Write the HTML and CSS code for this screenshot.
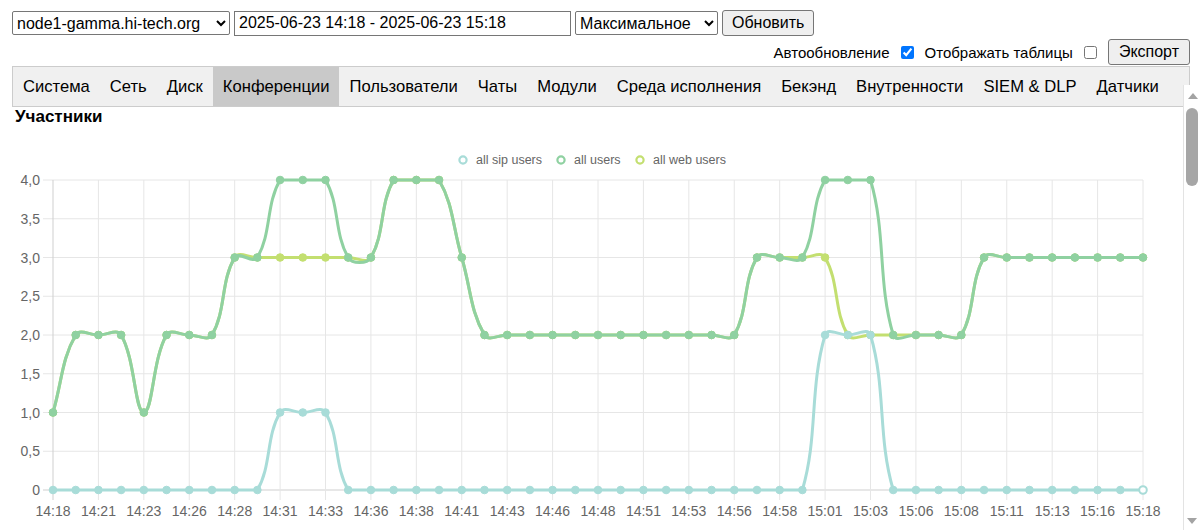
FILE: index.html
```html
<!DOCTYPE html>
<html lang="ru">
<head>
  <meta charset="UTF-8">
  <title>Мониторинг</title>
  <link rel="stylesheet" href="styles.css">
</head>
<body>

  <div class="toolbar">
    <div class="row">
      <select class="host"><option>node1-gamma.hi-tech.org</option></select>
      <input class="period" type="text" value="2025-06-23 14:18 - 2025-06-23 15:18">
      <select class="agg"><option>Максимальное</option></select>
      <button class="btn">Обновить</button>
    </div>
    <div class="row right">
      <label>Автообновление <input type="checkbox" checked></label>
      <label>Отображать таблицы <input type="checkbox"></label>
      <button class="btn">Экспорт</button>
    </div>
  </div>

  <nav class="tabs">
    <button>Система</button>
    <button>Сеть</button>
    <button>Диск</button>
    <button class="active">Конференции</button>
    <button>Пользователи</button>
    <button>Чаты</button>
    <button>Модули</button>
    <button>Среда исполнения</button>
    <button>Бекэнд</button>
    <button>Внутренности</button>
    <button>SIEM &amp; DLP</button>
    <button>Датчики</button>
  </nav>

  <div class="content">
    <div class="charts">
      <h3>Участники</h3>
      <svg id="chart" width="1168" height="400"></svg>
    </div>
  </div>

  <!-- scrollbar of the content pane -->
  <div class="vscroll">
    <div class="arrow up"></div>
    <div class="thumb"></div>
    <div class="arrow down"></div>
  </div>

  <script src="script.js"></script>
</body>
</html>
```

FILE: styles.css
```css
* {
  box-sizing: border-box;
}
html, body {
  overflow: hidden;
}
body {
  margin: 0;
  font-family: "Liberation Sans", Arial, sans-serif;
  color: #000;
  background: #fff;
}
.toolbar {
  padding: 10px 11px 0 12px;
}
.row {
  display: flex;
  align-items: center;
  gap: 4px;
  height: 26px;
}
.row.right {
  justify-content: flex-end;
  margin-top: 3px;
  gap: 11px;
}
select, input[type="text"], .btn {
  font-family: inherit;
  font-size: 16px;
  color: #000;
}
select {
  height: 24px;
  border: 1px solid #767676;
  border-radius: 2px;
  background: #fff;
  padding: 0;
}
.host {
  width: 218px;
}
.agg {
  width: 143px;
}
.period {
  width: 337px;
  height: 25px;
  border: 1px solid #767676;
  padding: 0 4px;
}
.btn {
  height: 26px;
  padding: 0 9px;
  background: #efefef;
  border: 1px solid #767676;
  border-radius: 3px;
}
.row.right .btn {
  padding: 0 10px;
}
label {
  font-size: 15px;
  display: flex;
  align-items: center;
}
label input {
  margin: 0 0 0 11px;
  width: 13px;
  height: 13px;
}
.tabs {
  display: flex;
  margin: 1px 11px 0 12px;
  height: 41px;
  background: #f0f0f0;
  border: 1px solid #cccccc;
}
.tabs button {
  border: none;
  background: none;
  font-family: inherit;
  font-size: 16.6px;
  padding: 0 10px;
  color: #000;
}
.tabs button.active {
  background: #c9c9c9;
}
.content {
  margin: -22px 0 0 12px;
  padding-top: 22px;
  height: 445px;
  overflow: hidden;
}
.charts {
  min-height: 2380px;
}
h3 {
  margin: 0;
  padding-left: 3px;
  font-size: 17px;
  line-height: 20px;
}
#chart {
  display: block;
  font-family: "Liberation Sans", Arial, sans-serif;
}
.vscroll {
  position: absolute;
  top: 85px;
  right: 0;
  width: 18px;
  height: 445px;
  background: #fff;
  border-left: 1px solid #e3e3e3;
}
.arrow {
  width: 0;
  height: 0;
  margin: 0 auto;
  border-left: 5px solid transparent;
  border-right: 5px solid transparent;
}
.arrow.up {
  margin-top: 8px;
  border-bottom: 6px solid #a3a3a3;
}
.arrow.down {
  position: absolute;
  left: 3px;
  bottom: 6px;
  border-top: 6px solid #a3a3a3;
}
.thumb {
  margin: 9px 0 0 2px;
  width: 12px;
  height: 78px;
  border-radius: 6px;
  background: #a6a6a6;
}
```

FILE: script.js
```js
const NS = "http://www.w3.org/2000/svg";
const svg = document.getElementById("chart");

const labels = ["14:18", "14:21", "14:23", "14:26", "14:28", "14:31", "14:33", "14:36", "14:38",
  "14:41", "14:43", "14:46", "14:48", "14:51", "14:53", "14:56", "14:58", "15:01", "15:03",
  "15:06", "15:08", "15:11", "15:13", "15:16", "15:18"];

const all = [1, 2, 2, 2, 1, 2, 2, 2, 3, 3, 4, 4, 4, 3, 3, 4, 4, 4, 3, 2,
  2, 2, 2, 2, 2, 2, 2, 2, 2, 2, 2,
  3, 3, 3, 4, 4, 4, 2, 2, 2, 2,
  3, 3, 3, 3, 3, 3, 3, 3];
const sip = all.map(() => 0);
[10, 11, 12].forEach(i => sip[i] = 1);
[34, 35, 36].forEach(i => sip[i] = 2);
const web = all.map((v, i) => v - sip[i]);
web[34] = 3;

// chart area
const area = { left: 41, right: 1131, top: 53, bottom: 363 };
const maxY = 4;
const step = (area.right - area.left) / (all.length - 1);
const yOf = v => area.bottom - v / maxY * (area.bottom - area.top);

function el(tag, attrs, text) {
  const e = document.createElementNS(NS, tag);
  for (const k in attrs) e.setAttribute(k, attrs[k]);
  if (text !== undefined) e.textContent = text;
  svg.appendChild(e);
  return e;
}

// grid
for (let j = 0; j <= 8; j++) {
  const y = area.top + j * (area.bottom - area.top) / 8;
  el("line", { x1: area.left - 10, x2: area.right, y1: y, y2: y, stroke: j === 8 ? "#cfcfcf" : "#e6e6e6", "stroke-width": 1 });
  const v = 4 - j * 0.5;
  el("text", { x: area.left - 13, y: y + 5, "text-anchor": "end", "font-size": 14, fill: "#666" },
    v === 0 ? "0" : v.toFixed(1).replace(".", ","));
}
labels.forEach((t, k) => {
  const x = area.left + k * step * 2;
  el("line", { x1: x, x2: x, y1: area.top, y2: area.bottom + 10, stroke: k === 0 ? "#cfcfcf" : "#e6e6e6", "stroke-width": 1 });
  el("text", { x: x, y: area.bottom + 26, "text-anchor": "middle", "font-size": 14, fill: "#666" }, t);
});

// legend
const series = [
  { name: "all sip users", data: sip, color: "#a8dcd8", lx: 451 },
  { name: "all users", data: all, color: "#8fd1a1", lx: 549 },
  { name: "all web users", data: web, color: "#c3df70", lx: 628 }
];
series.forEach(s => {
  el("circle", { cx: s.lx, cy: 33, r: 3.6, fill: "#fff", stroke: s.color, "stroke-width": 2.2 });
  el("text", { x: s.lx + 13, y: 37, "font-size": 12.5, fill: "#666" }, s.name);
});

// spline like chart.js, tension 0.4, control points capped to area
function path(data) {
  const pts = data.map((v, i) => ({ x: area.left + i * step, y: yOf(v) }));
  const cap = y => Math.max(area.top, Math.min(area.bottom, y));
  const cps = pts.map((cur, i) => {
    const prev = pts[i - 1] || cur;
    const next = pts[i + 1] || cur;
    const d01 = Math.hypot(cur.x - prev.x, cur.y - prev.y);
    const d12 = Math.hypot(next.x - cur.x, next.y - cur.y);
    let s01 = d01 / (d01 + d12), s12 = d12 / (d01 + d12);
    if (isNaN(s01)) s01 = 0;
    if (isNaN(s12)) s12 = 0;
    const fa = 0.4 * s01, fb = 0.4 * s12;
    return {
      px: cur.x - fa * (next.x - prev.x), py: cap(cur.y - fa * (next.y - prev.y)),
      nx: cur.x + fb * (next.x - prev.x), ny: cap(cur.y + fb * (next.y - prev.y))
    };
  });
  let d = "M" + pts[0].x + " " + pts[0].y;
  for (let i = 1; i < pts.length; i++) {
    d += " C" + cps[i - 1].nx.toFixed(2) + " " + cps[i - 1].ny.toFixed(2) + " " +
      cps[i].px.toFixed(2) + " " + cps[i].py.toFixed(2) + " " + pts[i].x.toFixed(2) + " " + pts[i].y.toFixed(2);
  }
  return { d, pts };
}

// first dataset ends up on top
series.slice().reverse().forEach(s => {
  const p = path(s.data);
  el("path", { d: p.d, fill: "none", stroke: s.color, "stroke-width": 3 });
  p.pts.forEach((pt, i) => {
    const last = s.data === sip && i === p.pts.length - 1;
    el("circle", { cx: pt.x, cy: pt.y, r: 3.8, fill: last ? "#fff" : s.color, stroke: s.color, "stroke-width": last ? 2 : 1 });
  });
});
```
